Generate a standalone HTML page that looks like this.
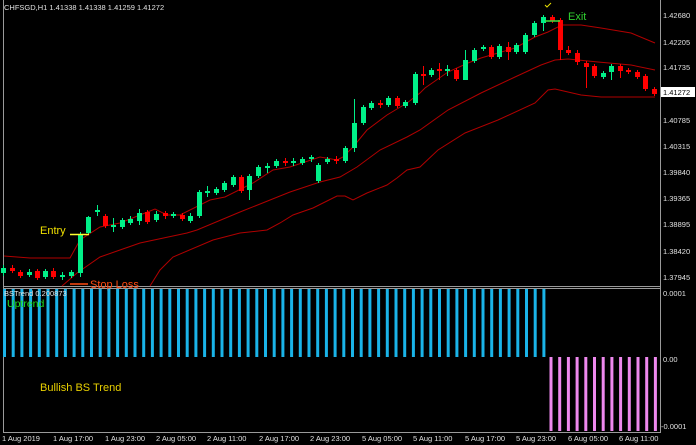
<!DOCTYPE html>
<html><head><meta charset="utf-8"><style>
body{margin:0;background:#000;width:696px;height:445px;overflow:hidden}
svg{display:block}
text{font-family:"Liberation Sans",sans-serif}
</style></head><body>
<svg width="696" height="445" viewBox="0 0 696 445" xmlns="http://www.w3.org/2000/svg">
<rect width="696" height="445" fill="#000"/>
<!-- frames -->
<g stroke="#9a9a9a" stroke-width="1" fill="none">
<line x1="3.5" y1="0" x2="3.5" y2="432"/>
<line x1="660.5" y1="0" x2="660.5" y2="432"/>
<line x1="3" y1="286.5" x2="661" y2="286.5"/>
<line x1="3" y1="288.5" x2="661" y2="288.5"/>
<line x1="3" y1="432.5" x2="661" y2="432.5"/>
</g>
<!-- bands -->
<g stroke="#b00000" stroke-width="1" fill="none">
<polyline points="4,256 30,258 70,258 80,240 100,227 120,223 140,215 155,209 167,215 180,215 210,200 225,197 253,183 273,170 290,167 320,157 337,160 343,157 353,147 367,130 387,115 407,103 420,93 425,88 448,72 468,63 481,58 515,48 535,37 548,32 558,27 561,25 581,25 601,28 631,33 655,43"/>
<polyline points="62,286 77,273 100,257 140,243 187,233 197,230 240,212 290,192 320,182 340,177 357,167 380,150 407,137 420,130 448,110 481,93 515,77 541,65 555,60 568,59 598,62 631,65 655,70"/>
<polyline points="150,286 160,270 173,257 213,240 240,233 267,230 280,223 293,215 313,208 323,203 337,196 345,196 353,200 367,193 387,185 397,178 407,170 420,167 438,150 465,133 498,120 535,103 548,90 555,89 568,92 581,95 601,97 635,97 655,97"/>
</g>
<!-- candles: green -->
<g fill="#00f088" stroke="#00f088">
<g stroke-width="1">
<line x1="3.5" y1="265" x2="3.5" y2="276"/><line x1="29.5" y1="269" x2="29.5" y2="277"/><line x1="45.5" y1="269" x2="45.5" y2="279"/><line x1="62.5" y1="272" x2="62.5" y2="280"/><line x1="71.5" y1="270" x2="71.5" y2="278"/><line x1="80.5" y1="232" x2="80.5" y2="277"/><line x1="88.5" y1="216" x2="88.5" y2="235"/><line x1="97.5" y1="205" x2="97.5" y2="216"/><line x1="113.5" y1="218" x2="113.5" y2="232"/><line x1="122.5" y1="218" x2="122.5" y2="229"/><line x1="130.5" y1="216" x2="130.5" y2="225"/><line x1="139.5" y1="209" x2="139.5" y2="225"/><line x1="156.5" y1="211" x2="156.5" y2="222"/><line x1="173.5" y1="212" x2="173.5" y2="218"/><line x1="190.5" y1="213" x2="190.5" y2="223"/><line x1="199.5" y1="190" x2="199.5" y2="218"/><line x1="207.5" y1="186" x2="207.5" y2="197"/><line x1="216.5" y1="187" x2="216.5" y2="195"/><line x1="224.5" y1="181" x2="224.5" y2="192"/><line x1="233.5" y1="175" x2="233.5" y2="187"/><line x1="249.5" y1="174" x2="249.5" y2="200"/><line x1="258.5" y1="165" x2="258.5" y2="178"/><line x1="267.5" y1="163" x2="267.5" y2="173"/><line x1="276.5" y1="159" x2="276.5" y2="168"/><line x1="293.5" y1="158" x2="293.5" y2="166"/><line x1="302.5" y1="157" x2="302.5" y2="165"/><line x1="311.5" y1="155" x2="311.5" y2="162"/><line x1="318.5" y1="163" x2="318.5" y2="183"/><line x1="327.5" y1="157" x2="327.5" y2="164"/><line x1="345.5" y1="146" x2="345.5" y2="163"/><line x1="354.5" y1="99" x2="354.5" y2="152"/><line x1="363.5" y1="105" x2="363.5" y2="125"/><line x1="371.5" y1="101" x2="371.5" y2="110"/><line x1="388.5" y1="96" x2="388.5" y2="107"/><line x1="405.5" y1="100" x2="405.5" y2="108"/><line x1="415.5" y1="72" x2="415.5" y2="105"/><line x1="431.5" y1="68" x2="431.5" y2="77"/><line x1="447.5" y1="65" x2="447.5" y2="76"/><line x1="465.5" y1="50" x2="465.5" y2="80"/><line x1="474.5" y1="48" x2="474.5" y2="63"/><line x1="483.5" y1="45" x2="483.5" y2="51"/><line x1="499.5" y1="44" x2="499.5" y2="59"/><line x1="516.5" y1="43" x2="516.5" y2="54"/><line x1="525.5" y1="33" x2="525.5" y2="54"/><line x1="534.5" y1="21" x2="534.5" y2="37"/><line x1="543.5" y1="15" x2="543.5" y2="31"/><line x1="603.5" y1="71" x2="603.5" y2="79"/><line x1="611.5" y1="64" x2="611.5" y2="80"/>
</g>
<g stroke="none">
<rect x="1" y="268" width="5" height="5"/><rect x="27" y="272" width="5" height="3"/><rect x="43" y="271" width="5" height="6"/><rect x="60" y="275" width="5" height="2"/><rect x="69" y="272" width="5" height="4"/><rect x="78" y="234" width="5" height="39"/><rect x="86" y="217" width="5" height="16"/><rect x="95" y="210" width="5" height="2"/><rect x="111" y="225" width="5" height="2"/><rect x="120" y="220" width="5" height="7"/><rect x="128" y="219" width="5" height="4"/><rect x="137" y="213" width="5" height="8"/><rect x="154" y="214" width="5" height="6"/><rect x="171" y="214" width="5" height="2"/><rect x="188" y="216" width="5" height="5"/><rect x="197" y="192" width="5" height="24"/><rect x="205" y="191" width="5" height="2"/><rect x="214" y="189" width="5" height="4"/><rect x="222" y="183" width="5" height="7"/><rect x="231" y="177" width="5" height="8"/><rect x="247" y="176" width="5" height="14"/><rect x="256" y="167" width="5" height="9"/><rect x="265" y="166" width="5" height="2"/><rect x="274" y="161" width="5" height="5"/><rect x="291" y="161" width="5" height="2"/><rect x="300" y="159" width="5" height="4"/><rect x="309" y="157" width="5" height="2"/><rect x="316" y="165" width="5" height="16"/><rect x="325" y="159" width="5" height="3"/><rect x="343" y="148" width="5" height="13"/><rect x="352" y="123" width="5" height="25"/><rect x="361" y="107" width="5" height="16"/><rect x="369" y="103" width="5" height="5"/><rect x="386" y="98" width="5" height="7"/><rect x="403" y="102" width="5" height="4"/><rect x="413" y="74" width="5" height="29"/><rect x="429" y="70" width="5" height="5"/><rect x="445" y="69" width="5" height="2"/><rect x="463" y="60" width="5" height="20"/><rect x="472" y="50" width="5" height="11"/><rect x="481" y="47" width="5" height="2"/><rect x="497" y="46" width="5" height="11"/><rect x="514" y="45" width="5" height="7"/><rect x="523" y="35" width="5" height="17"/><rect x="532" y="23" width="5" height="12"/><rect x="541" y="17" width="5" height="6"/><rect x="601" y="73" width="5" height="4"/><rect x="609" y="66" width="5" height="6"/>
</g></g>
<!-- candles: red -->
<g fill="#ff0000" stroke="#ff0000">
<g stroke-width="1">
<line x1="12.5" y1="265" x2="12.5" y2="273"/><line x1="20.5" y1="270" x2="20.5" y2="278"/><line x1="37.5" y1="269" x2="37.5" y2="280"/><line x1="53.5" y1="268" x2="53.5" y2="279"/><line x1="105.5" y1="214" x2="105.5" y2="228"/><line x1="147.5" y1="210" x2="147.5" y2="224"/><line x1="165.5" y1="211" x2="165.5" y2="219"/><line x1="182.5" y1="213" x2="182.5" y2="221"/><line x1="241.5" y1="175" x2="241.5" y2="193"/><line x1="285.5" y1="158" x2="285.5" y2="166"/><line x1="336.5" y1="156" x2="336.5" y2="164"/><line x1="380.5" y1="100" x2="380.5" y2="108"/><line x1="397.5" y1="96" x2="397.5" y2="108"/><line x1="423.5" y1="66" x2="423.5" y2="85"/><line x1="439.5" y1="63" x2="439.5" y2="80"/><line x1="456.5" y1="68" x2="456.5" y2="81"/><line x1="491.5" y1="45" x2="491.5" y2="59"/><line x1="508.5" y1="42" x2="508.5" y2="60"/><line x1="552.5" y1="15" x2="552.5" y2="23"/><line x1="560.5" y1="18" x2="560.5" y2="60"/><line x1="568.5" y1="46" x2="568.5" y2="55"/><line x1="577.5" y1="50" x2="577.5" y2="65"/><line x1="586.5" y1="61" x2="586.5" y2="88"/><line x1="594.5" y1="64" x2="594.5" y2="78"/><line x1="620.5" y1="64" x2="620.5" y2="78"/><line x1="628.5" y1="68" x2="628.5" y2="74"/><line x1="637.5" y1="70" x2="637.5" y2="79"/><line x1="645.5" y1="74" x2="645.5" y2="91"/><line x1="654.5" y1="87" x2="654.5" y2="96"/>
</g>
<g stroke="none">
<rect x="10" y="268" width="5" height="3"/><rect x="18" y="272" width="5" height="4"/><rect x="35" y="271" width="5" height="7"/><rect x="51" y="271" width="5" height="6"/><rect x="103" y="216" width="5" height="10"/><rect x="145" y="212" width="5" height="10"/><rect x="163" y="213" width="5" height="3"/><rect x="180" y="215" width="5" height="4"/><rect x="239" y="177" width="5" height="14"/><rect x="283" y="161" width="5" height="2"/><rect x="334" y="159" width="5" height="2"/><rect x="378" y="103" width="5" height="2"/><rect x="395" y="98" width="5" height="8"/><rect x="421" y="74" width="5" height="2"/><rect x="437" y="69" width="5" height="2"/><rect x="454" y="70" width="5" height="9"/><rect x="489" y="47" width="5" height="10"/><rect x="506" y="47" width="5" height="5"/><rect x="550" y="17" width="5" height="4"/><rect x="558" y="20" width="5" height="30"/><rect x="566" y="50" width="5" height="3"/><rect x="575" y="53" width="5" height="9"/><rect x="584" y="63" width="5" height="4"/><rect x="592" y="66" width="5" height="10"/><rect x="618" y="66" width="5" height="5"/><rect x="626" y="70" width="5" height="2"/><rect x="635" y="72" width="5" height="5"/><rect x="643" y="76" width="5" height="13"/><rect x="652" y="89" width="5" height="5"/>
</g></g>
<!-- annotations -->
<line x1="70" y1="234.5" x2="89" y2="234.5" stroke="#ffff30" stroke-width="1.5"/>
<line x1="70" y1="284" x2="88" y2="284" stroke="#ff4a10" stroke-width="1.5"/>
<line x1="545" y1="21" x2="560" y2="21" stroke="#40e040" stroke-width="1.5"/>
<path d="M545,5 l2,2 l4,-4" stroke="#e8e000" fill="none" stroke-width="1"/>
<text x="40" y="234" font-size="11" fill="#f0e000">Entry</text>
<text x="90" y="288" font-size="11" fill="#ff4a10">Stop Loss</text>
<text x="568" y="20" font-size="11" fill="#30d030">Exit</text>
<text x="4" y="10" font-size="7.5" fill="#e0e0e0">CHFSGD,H1  1.41338 1.41338 1.41259 1.41272</text>
<!-- price axis -->
<g font-size="7.5" fill="#e0e0e0">
<text x="663" y="18">1.42680</text><text x="663" y="45">1.42205</text><text x="663" y="70">1.41735</text><text x="663" y="123">1.40785</text><text x="663" y="149">1.40315</text><text x="663" y="175">1.39840</text><text x="663" y="201">1.39365</text><text x="663" y="227">1.38895</text><text x="663" y="254">1.38420</text><text x="663" y="280">1.37945</text>
<text x="663" y="296">0.0001</text><text x="663" y="362">0.00</text><text x="661" y="429">-0.0001</text>
</g>
<rect x="661" y="87" width="34" height="10" fill="#fff"/>
<text x="663" y="95" font-size="7.5" fill="#000">1.41272</text>
<!-- indicator -->
<g fill="#1ab4e8">
<rect x="3" y="289" width="3" height="68"/><rect x="11.7" y="289" width="3" height="68"/><rect x="20.4" y="289" width="3" height="68"/><rect x="29.1" y="289" width="3" height="68"/><rect x="37.8" y="289" width="3" height="68"/><rect x="46.5" y="289" width="3" height="68"/><rect x="55.2" y="289" width="3" height="68"/><rect x="63.9" y="289" width="3" height="68"/><rect x="72.6" y="289" width="3" height="68"/><rect x="81.3" y="289" width="3" height="68"/><rect x="90" y="289" width="3" height="68"/><rect x="98.7" y="289" width="3" height="68"/><rect x="107.4" y="289" width="3" height="68"/><rect x="116.1" y="289" width="3" height="68"/><rect x="124.8" y="289" width="3" height="68"/><rect x="133.5" y="289" width="3" height="68"/><rect x="142.2" y="289" width="3" height="68"/><rect x="150.9" y="289" width="3" height="68"/><rect x="159.6" y="289" width="3" height="68"/><rect x="168.3" y="289" width="3" height="68"/><rect x="177" y="289" width="3" height="68"/><rect x="185.7" y="289" width="3" height="68"/><rect x="194.4" y="289" width="3" height="68"/><rect x="203.1" y="289" width="3" height="68"/><rect x="211.8" y="289" width="3" height="68"/><rect x="220.5" y="289" width="3" height="68"/><rect x="229.2" y="289" width="3" height="68"/><rect x="237.9" y="289" width="3" height="68"/><rect x="246.6" y="289" width="3" height="68"/><rect x="255.3" y="289" width="3" height="68"/><rect x="264" y="289" width="3" height="68"/><rect x="272.7" y="289" width="3" height="68"/><rect x="281.4" y="289" width="3" height="68"/><rect x="290.1" y="289" width="3" height="68"/><rect x="298.8" y="289" width="3" height="68"/><rect x="307.5" y="289" width="3" height="68"/><rect x="316.2" y="289" width="3" height="68"/><rect x="324.9" y="289" width="3" height="68"/><rect x="333.6" y="289" width="3" height="68"/><rect x="342.3" y="289" width="3" height="68"/><rect x="351" y="289" width="3" height="68"/><rect x="359.7" y="289" width="3" height="68"/><rect x="368.4" y="289" width="3" height="68"/><rect x="377.1" y="289" width="3" height="68"/><rect x="385.8" y="289" width="3" height="68"/><rect x="394.5" y="289" width="3" height="68"/><rect x="403.2" y="289" width="3" height="68"/><rect x="411.9" y="289" width="3" height="68"/><rect x="420.6" y="289" width="3" height="68"/><rect x="429.3" y="289" width="3" height="68"/><rect x="438" y="289" width="3" height="68"/><rect x="446.7" y="289" width="3" height="68"/><rect x="455.4" y="289" width="3" height="68"/><rect x="464.1" y="289" width="3" height="68"/><rect x="472.8" y="289" width="3" height="68"/><rect x="481.5" y="289" width="3" height="68"/><rect x="490.2" y="289" width="3" height="68"/><rect x="498.9" y="289" width="3" height="68"/><rect x="507.6" y="289" width="3" height="68"/><rect x="516.3" y="289" width="3" height="68"/><rect x="525" y="289" width="3" height="68"/><rect x="533.7" y="289" width="3" height="68"/><rect x="542.4" y="289" width="3" height="68"/>
</g>
<g fill="#ee88ee">
<rect x="549.5" y="357" width="3" height="74"/><rect x="558.2" y="357" width="3" height="74"/><rect x="566.9" y="357" width="3" height="74"/><rect x="575.6" y="357" width="3" height="74"/><rect x="584.3" y="357" width="3" height="74"/><rect x="593" y="357" width="3" height="74"/><rect x="601.7" y="357" width="3" height="74"/><rect x="610.4" y="357" width="3" height="74"/><rect x="619.1" y="357" width="3" height="74"/><rect x="627.8" y="357" width="3" height="74"/><rect x="636.5" y="357" width="3" height="74"/><rect x="645.2" y="357" width="3" height="74"/><rect x="653.9" y="357" width="3" height="74"/>
</g>
<text x="4" y="296" font-size="7.5" fill="#e0e0e0">BSTrend 0.200873</text>
<text x="7" y="307" font-size="10.5" fill="#20e020">Uptrend</text>
<text x="40" y="391" font-size="11" fill="#e8d000">Bullish BS Trend</text>
<!-- time axis -->
<g font-size="7.5" fill="#e0e0e0">
<text x="2" y="441">1 Aug 2019</text><text x="53" y="441">1 Aug 17:00</text><text x="105" y="441">1 Aug 23:00</text><text x="156" y="441">2 Aug 05:00</text><text x="207" y="441">2 Aug 11:00</text><text x="259" y="441">2 Aug 17:00</text><text x="310" y="441">2 Aug 23:00</text><text x="362" y="441">5 Aug 05:00</text><text x="413" y="441">5 Aug 11:00</text><text x="465" y="441">5 Aug 17:00</text><text x="516" y="441">5 Aug 23:00</text><text x="568" y="441">6 Aug 05:00</text><text x="619" y="441">6 Aug 11:00</text>
</g>
</svg>
</body></html>
